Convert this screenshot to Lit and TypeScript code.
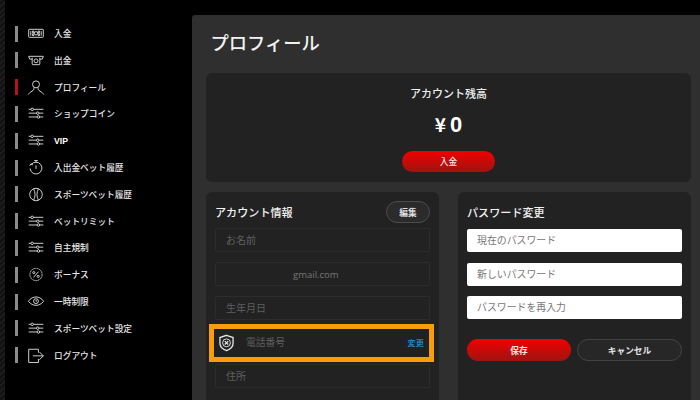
import { LitElement, html, css, svg } from "lit";
import { customElement } from "lit/decorators.js";

const sliders = svg`<path d="M1 3h3M8 3h14M1 8.500h11M16 8.500h6M1 14h12M17 14h5"/><circle cx="6" cy="3" r="1.800"/><circle cx="14" cy="8.500" r="1.800"/><circle cx="15" cy="14" r="1.800"/>`;
const cash = svg`<rect x="1" y="3" width="21" height="11.500" rx="1"/><path d="M4 5.500v6.500M19 5.500v6.500M6.500 5.500h2v2.500h-2zM14.500 5.500h2v2.500h-2zM6.500 9.500h2v2.500h-2zM14.500 9.500h2v2.500h-2z"/><circle cx="11.500" cy="8.700" r="2.400"/>`;
const atm = svg`<path d="M1 3h21l-1.500 4H17M1 3l1.500 4H6M6 5v9a1 1 0 0 0 1 1h9a1 1 0 0 0 1-1V5"/><circle cx="11.500" cy="9.500" r="2.800"/>`;
const user = svg`<circle cx="11.500" cy="4.500" r="5"/><path d="M8.500 9c.3 2.800-.5 4-2.800 5.300C3.500 15.500 1.500 17 .5 19M14.500 9c-.3 2.800.5 4 2.800 5.300 2.200 1.200 4.200 2.700 5.200 4.700"/>`;
const timer = svg`<path d="M9 -1h5M11.500 -1v3M4.500 5A8.500 8.500 0 1 1 3 10.500M2.500 6.500l1.800-3 2.700 1.800M11.500 6v5"/>`;
const ball = svg`<circle cx="11.500" cy="9" r="9"/><path d="M8 .8c2.800 5 2.800 11.400 0 16.400M15 .8c-2.800 5-2.800 11.400 0 16.400"/>`;
const bonus = svg`<circle cx="11.500" cy="9" r="8.800" stroke-dasharray="2 .8"/><path d="M15 5l-7 8"/><circle cx="8.300" cy="6.300" r="1.500"/><circle cx="14.700" cy="11.700" r="1.500"/>`;
const eye = svg`<path d="M.5 8.500C4 4 7.500 2.500 11.500 2.500S19 4 22.500 8.500c-3.500 4.500-7 6-11 6s-7.500-1.500-11-6z"/><circle cx="11.500" cy="8.500" r="3.500"/><path d="M11.500 7v1.500h1.500"/>`;
const logout = svg`<path d="M15 5V0H1v19h14v-5M7 9.500h15M16.500 4l5.500 5.500-5.500 5.500"/>`;

const items = [
  ["入金", cash], ["出金", atm], ["プロフィール", user], ["ショップコイン", sliders], ["VIP", sliders],
  ["入出金ベット履歴", timer], ["スポーツベット履歴", ball], ["ベットリミット", sliders], ["自主規制", sliders],
  ["ボーナス", bonus], ["一時制限", eye], ["スポーツベット設定", sliders], ["ログアウト", logout],
] as const;

@customElement("app-root")
export class AppRoot extends LitElement {
  static styles = css`
    :host { display: block; width: 700px; height: 400px; overflow: hidden; background: #000; color: #eee;
      font-family: "Noto Sans CJK JP", "Noto Sans", sans-serif; }
    .page { display: grid; grid-template-columns: 5px 187px 1fr; height: 400px; }
    .strip { background: repeating-linear-gradient(135deg, #1c1c1c 0 2px, #111 2px 4px); }
    .side { padding: 20.200px 0 0 10px; display: flex; flex-direction: column; }
    .item { height: 26.800px; display: flex; align-items: center; font-size: 8.700px; font-weight: 500; color: #e6e6e6; }
    .bar { width: 3px; height: 16px; background: #8b8b8b; margin-right: 10px; }
    .active .bar { background: #b4111a; }
    .item svg { width: 16px; height: 13px; margin-right: 10px; fill: none; stroke: #e2e2e2; stroke-width: 1.300; overflow: visible; }
    .vip { font-weight: 700; font-family: "Liberation Sans", sans-serif; color: #fff; }
    .panel { margin-top: 15px; padding: 0 9px 0 14px; background: #2f2f2f; border-radius: 3px 0 0 0; overflow: hidden; }
    h1 { margin: 0; padding: 13px 0 0 4.500px; height: 45px; box-sizing: border-box; font-size: 18.300px; font-weight: 500; line-height: 29px; color: #f2f2f2; }
    .card { background: #222; border-radius: 6px; }
    .balance { height: 109px; display: flex; flex-direction: column; align-items: center; margin-top: 13px; }
    .balance .label { margin-top: 11px; font-size: 11px; line-height: 18px; font-weight: 500; }
    .amount { margin-top: 9px; line-height: 26px; font-weight: 700; color: #fff; display: flex; gap: 4px; align-items: baseline; }
    .amount span { font-size: 19px; }
    .amount b { font-family: "Liberation Sans", sans-serif; font-size: 22px; }
    .red { background: linear-gradient(#f20000, #9e1410); border: 0; color: #f4e4e4; font: inherit; font-size: 8.700px; font-weight: 500; border-radius: 11px; display: flex; align-items: center; justify-content: center; padding: 0; }
    .balance .red { margin-top: 13px; width: 93px; height: 21px; }
    .cols { display: grid; grid-template-columns: 233px 233px; justify-content: space-between; margin-top: 10px; }
    .col { height: 230px; padding: 9px 9px 0; box-sizing: border-box; }
    .head { display: flex; justify-content: space-between; align-items: center; height: 22px; margin-bottom: 5px; }
    h2 { margin: 0; font-size: 11.100px; font-weight: 500; color: #f2f2f2; }
    .edit { width: 44px; height: 22px; box-sizing: border-box; border: 1px solid #4c4c4c; border-radius: 11px; background: #2b2b2b; color: #ddd; font: inherit; font-size: 8.700px; font-weight: 700; padding: 0; }
    .field { height: 24px; box-sizing: border-box; border: 1px solid #2c2c2c; border-radius: 2px; padding: 0 0 2px 10px; display: flex; align-items: center; font-size: 10px; color: #5f5f5f; margin-bottom: 10px; }
    .mail { padding: 0 0 0 77px; color: #777; font-family: "Open Sans", sans-serif; font-size: 9.500px; }
    .phone { height: 28px; margin: -1px 1px 7px -1px; border: 0; border-radius: 0; padding: 0 5px 2px 5px; background: #212121; outline: 5px solid #fb9c0a; font-size: 9.750px; }
    .phone svg { width: 15px; height: 18px; margin: 2px 12px 0 0; fill: none; stroke: #e4e4e4; stroke-width: 1.400; }
    .phone span { flex: 1; }
    .phone em { font-style: normal; color: #1b82c6; font-size: 8.200px; font-weight: 700; }
    .pw .head { margin-bottom: 6px; }
    .input { height: 23px; background: #fff; border-radius: 2px; margin-bottom: 10.500px; padding-left: 10px; font-size: 9.900px; line-height: 22px; color: #777; }
    .actions { display: grid; grid-template-columns: 104px 105px; justify-content: space-between; margin-top: 20px; }
    .actions > * { height: 22px; }
    .cancel { border: 1px solid #444; border-radius: 11px; background: #272727; color: #e4e4e4; font: inherit; font-size: 8.700px; font-weight: 700; padding: 0; }
    .actions .red { font-weight: 700; }
  `;

  render() {
    return html`<div class="page">
      <div class="strip"></div>
      <nav class="side">
        ${items.map(([label, icon], i) => html`<div class="item ${i === 2 ? "active" : ""}">
          <span class="bar"></span>
          <svg viewBox="0 0 23 18">${icon}</svg>
          <span class="${label === "VIP" ? "vip" : ""}">${label}</span>
        </div>`)}
      </nav>
      <main class="panel">
        <h1>プロフィール</h1>
        <section class="card balance">
          <div class="label">アカウント残高</div>
          <div class="amount"><span>¥</span><b>0</b></div>
          <button class="red">入金</button>
        </section>
        <div class="cols">
          <section class="card col">
            <div class="head"><h2>アカウント情報</h2><button class="edit">編集</button></div>
            <div class="field">お名前</div>
            <div class="field mail">gmail.com</div>
            <div class="field">生年月日</div>
            <div class="field phone">
              <svg viewBox="0 0 16 18"><path d="M8 .8l7 2.400v6c0 3.800-3 6.500-7 8-4-1.500-7-4.200-7-8v-6z"/><circle cx="8" cy="8.800" r="4.200" stroke-width="1"/><path d="M6.200 7l3.600 3.600M9.800 7l-3.600 3.600"/></svg>
              <span>電話番号</span><em>変更</em>
            </div>
            <div class="field">住所</div>
          </section>
          <section class="card col pw">
            <div class="head"><h2>パスワード変更</h2></div>
            <div class="input">現在のパスワード</div>
            <div class="input">新しいパスワード</div>
            <div class="input">パスワードを再入力</div>
            <div class="actions"><button class="red">保存</button><button class="cancel">キャンセル</button></div>
          </section>
        </div>
      </main>
    </div>`;
  }
}
